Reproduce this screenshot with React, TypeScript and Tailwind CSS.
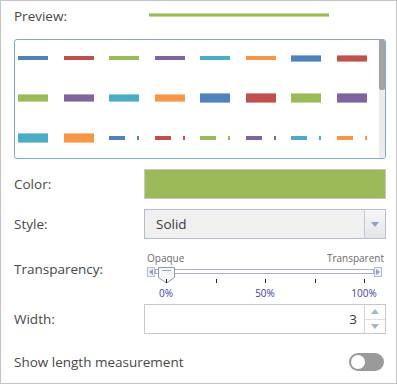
import React from "react";

const C = {
  blue: "#4f81bd",
  red: "#c0504d",
  green: "#9bbb59",
  purple: "#8064a2",
  teal: "#4bacc6",
  orange: "#f79646",
};

type Item = { color: string; h: number; dash?: boolean };

const rows: Item[][] = [
  [
    { color: C.blue, h: 4 },
    { color: C.red, h: 4 },
    { color: C.green, h: 4 },
    { color: C.purple, h: 4 },
    { color: C.teal, h: 4 },
    { color: C.orange, h: 4 },
    { color: C.blue, h: 7 },
    { color: C.red, h: 7 },
  ],
  [
    { color: C.green, h: 8 },
    { color: C.purple, h: 8 },
    { color: C.teal, h: 8 },
    { color: C.orange, h: 8 },
    { color: C.blue, h: 10 },
    { color: C.red, h: 10 },
    { color: C.green, h: 10 },
    { color: C.purple, h: 10 },
  ],
  [
    { color: C.teal, h: 10 },
    { color: C.orange, h: 10 },
    { color: C.blue, h: 4, dash: true },
    { color: C.red, h: 4, dash: true },
    { color: C.green, h: 4, dash: true },
    { color: C.purple, h: 4, dash: true },
    { color: C.teal, h: 4, dash: true },
    { color: C.orange, h: 4, dash: true },
  ],
];

function Sample({ item }: { item: Item }) {
  if (item.dash) {
    return (
      <div className="flex w-[30px] items-center">
        <div className="h-[4px] w-[16px]" style={{ backgroundColor: item.color }} />
        <div className="w-[12px]" />
        <div className="h-[4px] w-[2px]" style={{ backgroundColor: item.color }} />
      </div>
    );
  }
  return (
    <div
      className={`w-[30px] ${item.h > 4 ? "border-y border-white/40" : ""}`}
      style={{ backgroundColor: item.color, height: item.h }}
    />
  );
}

const ticks = [22, 72, 121, 171, 220];

export default function App() {
  return (
    <div className="box-border flex h-[384px] w-[397px] flex-col border border-[#c4c4c4] bg-white pl-[13px] pr-[10px] font-['Open_Sans',sans-serif] text-[13.5px] leading-[18px] text-[#474747]">
      {/* Preview */}
      <div className="flex h-[30px] items-center">
        <div className="w-[130px]">Preview:</div>
        <div className="ml-[5px] -mt-[3px] h-[4px] w-[180px] border-y border-white/40 bg-[#9bbb59]" />
      </div>

      {/* Symbol grid */}
      <div className="mt-[8px] flex h-[120px] w-[372px] overflow-hidden rounded-[3px] border border-[#7fa9d3]">
        <div className="-mt-[2px] flex-1">
          {rows.map((r, i) => (
            <div key={i} className="grid h-[40px] grid-cols-8 items-center">
              {r.map((it, j) => (
                <div key={j} className="flex items-center pl-[3px]">
                  <Sample item={it} />
                </div>
              ))}
            </div>
          ))}
        </div>
        <div className="flex w-[6px] flex-col bg-[#ececec]">
          <div className="h-[50px] rounded-b-[2px] bg-[#a3a3a3]" />
        </div>
      </div>

      {/* Color */}
      <div className="mt-[10px] flex h-[30px] items-center">
        <div className="w-[130px]">Color:</div>
        <div className="h-[30px] w-[242px] border border-[#c8c8c8] bg-[#9bbb59]" />
      </div>

      {/* Style */}
      <div className="mt-[10px] flex h-[30px] items-center">
        <div className="w-[130px]">Style:</div>
        <div className="flex h-[30px] w-[242px] border border-[#b8bfcc] bg-[#f0f0f0]">
          <div className="flex flex-1 items-center pl-[11px] text-[#3a3a3a]">Solid</div>
          <div className="flex w-[21px] items-center justify-center border-l border-[#c3c8d2] bg-gradient-to-b from-[#f7f7f7] to-[#e3e5e8]">
            <svg width="8" height="5" viewBox="0 0 8 5">
              <polygon points="0,0 8,0 4,5" fill="#8fa2c6" />
            </svg>
          </div>
        </div>
      </div>

      {/* Transparency */}
      <div className="mt-[9px] flex h-[50px] items-start">
        <div className="mt-[12px] w-[130px]">Transparency:</div>
        <div className="relative h-[50px] w-[242px] text-[10px] leading-[12px] text-[#6a6a6a]">
          <div className="absolute left-[3px] top-[4px]">Opaque</div>
          <div className="absolute right-[2px] top-[4px]">Transparent</div>
          {/* left button */}
          <div className="absolute left-[3px] top-[19px] flex h-[10px] w-[8px] items-center justify-center border border-[#b5bdcb] bg-[#eef0f4]">
            <svg width="4" height="6" viewBox="0 0 4 6">
              <polygon points="4,0 4,6 0,3" fill="#8fa2c6" />
            </svg>
          </div>
          {/* track */}
          <div className="absolute left-[11px] top-[21px] h-[5px] w-[219px] border border-[#aab2c2] bg-white" />
          {/* right button */}
          <div className="absolute left-[230px] top-[19px] flex h-[10px] w-[8px] items-center justify-center border border-[#b5bdcb] bg-[#eef0f4]">
            <svg width="4" height="6" viewBox="0 0 4 6">
              <polygon points="0,0 0,6 4,3" fill="#8fa2c6" />
            </svg>
          </div>
          {/* thumb */}
          <svg className="absolute left-[14px] top-[19px]" width="17" height="17" viewBox="0 0 17 17">
            <polygon points="0.5,0.5 16.5,0.5 16.5,10.5 8.5,16 0.5,10.5" fill="#f8f8f8" stroke="#8c9ab4" />
            <line x1="4" y1="3.5" x2="13" y2="3.5" stroke="#9aa6bd" />
          </svg>
          {/* ticks */}
          {ticks.map((t) => (
            <div key={t} className="absolute top-[31px] h-[4px] w-[1px] bg-[#222]" style={{ left: t }} />
          ))}
          <div className="absolute top-[39px] w-[40px] text-center text-[#3c3ca8]" style={{ left: 22 - 20 }}>0%</div>
          <div className="absolute top-[39px] w-[40px] text-center text-[#3c3ca8]" style={{ left: 121 - 20 }}>50%</div>
          <div className="absolute top-[39px] w-[40px] text-center text-[#3c3ca8]" style={{ left: 220 - 20 }}>100%</div>
        </div>
      </div>

      {/* Width */}
      <div className="mt-[6px] flex h-[30px] items-center">
        <div className="w-[130px]">Width:</div>
        <div className="flex h-[30px] w-[242px] border border-[#c8c8c8] bg-white">
          <div className="flex flex-1 items-center justify-end pr-[7px] text-[#3a3a3a]">3</div>
          <div className="flex w-[21px] flex-col border-l border-[#d0d4db]">
            <div className="flex flex-1 items-center justify-center border-b border-[#dcdfe4]">
              <svg width="8" height="5" viewBox="0 0 8 5">
                <polygon points="0,5 8,5 4,0" fill="#a3b3d2" />
              </svg>
            </div>
            <div className="flex flex-1 items-center justify-center">
              <svg width="8" height="5" viewBox="0 0 8 5">
                <polygon points="0,0 8,0 4,5" fill="#a3b3d2" />
              </svg>
            </div>
          </div>
        </div>
      </div>

      {/* Toggle */}
      <div className="mt-[19px] flex h-[18px] items-center justify-between pr-[2px]">
        <div>Show length measurement</div>
        <div className="flex h-[18px] w-[35px] items-center rounded-full bg-[#9a9a9a] pl-[2px]">
          <div className="h-[14px] w-[14px] rounded-full bg-white" />
        </div>
      </div>
    </div>
  );
}
